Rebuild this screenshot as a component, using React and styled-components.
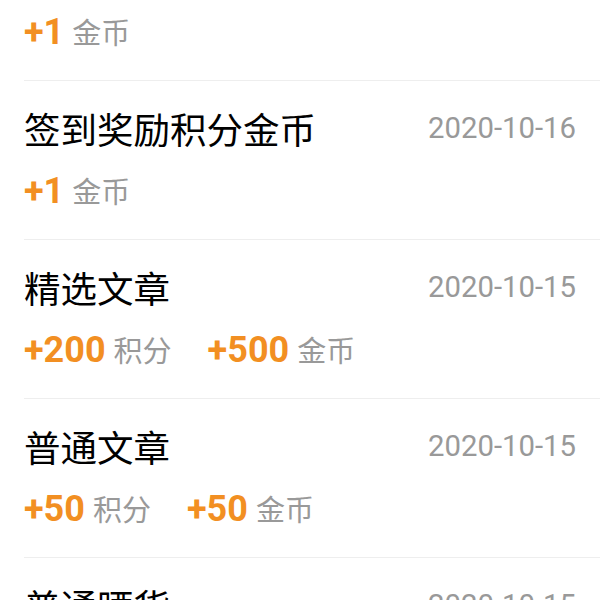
import React from "react";
import styled, { createGlobalStyle } from "styled-components";

const GlobalStyle = createGlobalStyle`
  html, body {
    margin: 0;
    padding: 0;
    background: #fff;
    overflow: hidden;
  }
  body {
    font-family: Roboto, "Noto Sans CJK SC", sans-serif;
  }
`;

const Page = styled.div`
  width: 600px;
  height: 600px;
  overflow: hidden;
  background: #fff;
`;

const List = styled.ul`
  list-style: none;
  margin: -78px 0 0;
  padding: 0;
`;

const Item = styled.li`
  margin-left: 24px;
  padding: 28px 24px 29px 0;
  border-bottom: 1px solid #eeeeee;
  display: flex;
  flex-direction: column;
  gap: 21px;
`;

const Head = styled.div`
  display: flex;
  align-items: center;
  justify-content: space-between;
  height: 40px;
`;

const Title = styled.div`
  font-family: "Noto Sans CJK SC", sans-serif;
  font-size: 36.5px;
  color: #000;
  line-height: 40px;
`;

const Date = styled.div`
  font-family: Roboto, sans-serif;
  font-size: 29.3px;
  color: #999;
  line-height: 40px;
  margin-top: -3px;
`;

const Rewards = styled.div`
  display: flex;
  align-items: baseline;
  gap: 36px;
  height: 40px;
  line-height: 40px;
`;

const Reward = styled.div`
  display: flex;
  align-items: baseline;
  gap: 8px;
`;

const Amount = styled.span`
  font-family: Roboto, sans-serif;
  font-weight: 700;
  font-size: 36px;
  color: #f28f22;
`;

const Unit = styled.span`
  font-family: "Noto Sans CJK SC", sans-serif;
  font-size: 29px;
  color: #999;
`;

const records = [
  { title: "签到奖励积分金币", date: "2020-10-16", rewards: [["+1", "金币"]] },
  { title: "签到奖励积分金币", date: "2020-10-16", rewards: [["+1", "金币"]] },
  { title: "精选文章", date: "2020-10-15", rewards: [["+200", "积分"], ["+500", "金币"]] },
  { title: "普通文章", date: "2020-10-15", rewards: [["+50", "积分"], ["+50", "金币"]] },
  { title: "普通晒货", date: "2020-10-15", rewards: [["+50", "积分"], ["+50", "金币"]] },
];

export default function App() {
  return (
    <Page>
      <GlobalStyle />
      <List>
        {records.map((r, i) => (
          <Item key={i}>
            <Head>
              <Title>{r.title}</Title>
              <Date>{r.date}</Date>
            </Head>
            <Rewards>
              {r.rewards.map(([amount, unit], j) => (
                <Reward key={j}>
                  <Amount>{amount}</Amount>
                  <Unit>{unit}</Unit>
                </Reward>
              ))}
            </Rewards>
          </Item>
        ))}
      </List>
    </Page>
  );
}
